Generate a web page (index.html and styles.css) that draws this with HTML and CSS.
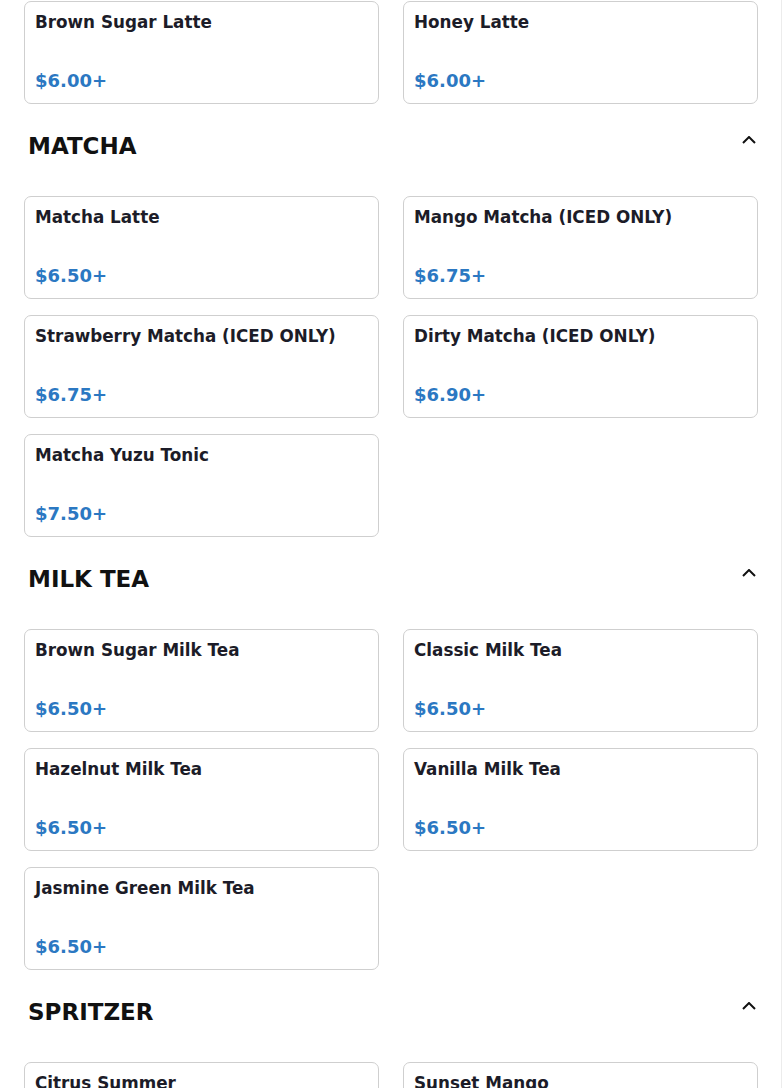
FILE: index.html
```html
<!DOCTYPE html>
<html lang="en">
<head>
<meta charset="utf-8">
<title>Menu</title>
<link rel="stylesheet" href="styles.css">
</head>
<body>
<main class="menu">
  <div class="grid first">
    <div class="card"><div class="name">Brown Sugar Latte</div><div class="price">$6.00+</div></div>
    <div class="card"><div class="name">Honey Latte</div><div class="price">$6.00+</div></div>
  </div>

  <section class="section">
    <div class="section-head">
      <h2 class="section-title">MATCHA</h2>
      <svg class="chev" width="14" height="8" viewBox="0 0 14 8"><path d="M1 7L7 1L13 7" fill="none" stroke="#111" stroke-width="2"/></svg>
    </div>
    <div class="grid">
      <div class="card"><div class="name">Matcha Latte</div><div class="price">$6.50+</div></div>
      <div class="card"><div class="name">Mango Matcha (ICED ONLY)</div><div class="price">$6.75+</div></div>
      <div class="card"><div class="name">Strawberry Matcha (ICED ONLY)</div><div class="price">$6.75+</div></div>
      <div class="card"><div class="name">Dirty Matcha (ICED ONLY)</div><div class="price">$6.90+</div></div>
      <div class="card"><div class="name">Matcha Yuzu Tonic</div><div class="price">$7.50+</div></div>
    </div>
  </section>

  <section class="section">
    <div class="section-head">
      <h2 class="section-title">MILK TEA</h2>
      <svg class="chev" width="14" height="8" viewBox="0 0 14 8"><path d="M1 7L7 1L13 7" fill="none" stroke="#111" stroke-width="2"/></svg>
    </div>
    <div class="grid">
      <div class="card"><div class="name">Brown Sugar Milk Tea</div><div class="price">$6.50+</div></div>
      <div class="card"><div class="name">Classic Milk Tea</div><div class="price">$6.50+</div></div>
      <div class="card"><div class="name">Hazelnut Milk Tea</div><div class="price">$6.50+</div></div>
      <div class="card"><div class="name">Vanilla Milk Tea</div><div class="price">$6.50+</div></div>
      <div class="card"><div class="name">Jasmine Green Milk Tea</div><div class="price">$6.50+</div></div>
    </div>
  </section>

  <section class="section">
    <div class="section-head">
      <h2 class="section-title">SPRITZER</h2>
      <svg class="chev" width="14" height="8" viewBox="0 0 14 8"><path d="M1 7L7 1L13 7" fill="none" stroke="#111" stroke-width="2"/></svg>
    </div>
    <div class="grid">
      <div class="card"><div class="name">Citrus Summer</div><div class="price">$6.50+</div></div>
      <div class="card"><div class="name">Sunset Mango</div><div class="price">$6.50+</div></div>
    </div>
  </section>
</main>
</body>
</html>
```

FILE: styles.css
```css
html, body {
  margin: 0;
  padding: 0;
  background: #fff;
}
body {
  font-family: "DejaVu Sans", "Liberation Sans", sans-serif;
  overflow: hidden;
  height: 1088px;
}
.menu {
  padding: 0 23px 0 24px;
  border-right: 1px solid #ececec;
  min-height: 1088px;
  box-sizing: border-box;
}
.grid {
  display: grid;
  grid-template-columns: 1fr 1fr;
  column-gap: 24px;
  row-gap: 16px;
}
.grid.first {
  padding-top: 1px;
}
.card {
  box-sizing: border-box;
  height: 103px;
  border: 1px solid #cfcfcf;
  border-radius: 7px;
  padding: 10px 10px 12px;
  display: flex;
  flex-direction: column;
  justify-content: space-between;
  background: #fff;
}
.name {
  font-size: 16.8px;
  font-weight: bold;
  color: #1c1c28;
}
.price {
  font-size: 18px;
  font-weight: bold;
  color: #2b78c2;
}
.section-head {
  display: flex;
  justify-content: space-between;
  align-items: flex-start;
  padding: 0 2px 0 4px;
  margin-top: 29px;
  margin-bottom: 37px;
}
.section-title {
  margin: 0;
  font-size: 23px;
  font-weight: bold;
  color: #111;
  line-height: 26px;
}
.chev {
  display: block;
  margin-top: 3px;
}
```
